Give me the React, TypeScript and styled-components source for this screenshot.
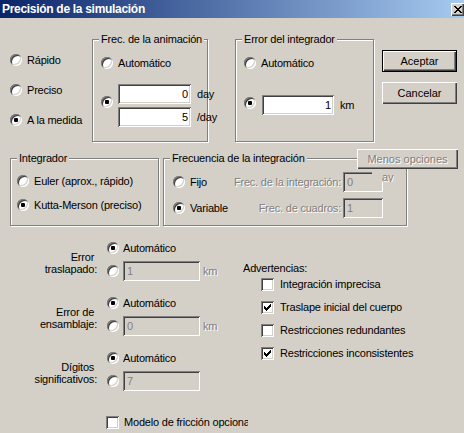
import styled, { createGlobalStyle, css } from "styled-components";

const GlobalStyle = createGlobalStyle`
  * { box-sizing: border-box; }
  html, body { margin: 0; padding: 0; background: #d4d0c8; }
  body {
    font-family: "Liberation Sans", Arial, sans-serif;
    font-size: 11px;
    letter-spacing: -0.2px;
    color: #000;
  }
`;

const sunken = css`
  box-shadow: inset 1px 1px 0 #808080, inset -1px -1px 0 #fff,
    inset 2px 2px 0 #404040, inset -2px -2px 0 #d4d0c8;
`;

const raised = css`
  box-shadow: inset 1px 1px 0 #fff, inset -1px -1px 0 #404040,
    inset -2px -2px 0 #808080;
`;

const Window = styled.div`
  width: 464px;
  height: 433px;
  overflow: hidden;
  background: #d4d0c8;
  display: flex;
  flex-direction: column;
`;

const TitleBar = styled.div`
  flex: none;
  height: 18px;
  display: flex;
  align-items: center;
  justify-content: space-between;
  padding-left: 2px;
  background: linear-gradient(to right, #0a246a, #a6caf0);
`;

const Title = styled.span`
  color: #fff;
  font-weight: bold;
  font-size: 12px;
  letter-spacing: -0.3px;
  line-height: 18px;
`;

const CloseButton = styled.button`
  width: 13px;
  height: 13px;
  padding: 0;
  border: 0;
  background: #d4d0c8;
  display: flex;
  align-items: center;
  justify-content: center;
  ${raised};
`;

const Body = styled.div`
  position: relative;
  display: flex;
  flex-direction: column;
  padding-left: 10px;
`;

const TopRow = styled.div`
  display: flex;
  align-items: flex-start;
  margin-top: 15px;
`;

const ModeList = styled.div`
  flex: none;
  width: 82px;
  padding-top: 21px;
  display: flex;
  flex-direction: column;
  gap: 18px;
`;

const Option = styled.label<{ $gap?: number }>`
  display: flex;
  align-items: center;
  gap: ${(p) => p.$gap ?? 5}px;
  height: 12px;
  line-height: 12px;
  white-space: nowrap;
`;

const Radio = styled.span<{ $on?: boolean; $mt?: number }>`
  flex: none;
  position: relative;
  width: 12px;
  height: 12px;
  margin-top: ${(p) => p.$mt ?? 0}px;
  border-radius: 50%;
  background: #fff;
  ${sunken};
  &::after {
    content: "";
    display: ${(p) => (p.$on ? "block" : "none")};
    position: absolute;
    left: 4px;
    top: 4px;
    width: 4px;
    height: 4px;
    border-radius: 1px;
    background: #000;
  }
`;

const Group = styled.fieldset<{ $w: number; $h: number }>`
  flex: none;
  margin: 0;
  padding: 0;
  min-width: 0;
  width: ${(p) => p.$w}px;
  height: ${(p) => p.$h}px;
  border: 1px solid #808080;
  box-shadow: inset 1px 1px 0 #fff, 1px 1px 0 #fff;
`;

const Legend = styled.legend`
  margin-left: 6px;
  padding: 0 2px;
  line-height: 13px;
  background: #d4d0c8;
`;

const GroupBody = styled.div<{ $pl: number; $pt: number; $gap?: number }>`
  position: relative;
  display: flex;
  flex-direction: column;
  gap: ${(p) => p.$gap ?? 0}px;
  padding-left: ${(p) => p.$pl}px;
  padding-top: ${(p) => p.$pt}px;
`;

const ChoiceRow = styled.div<{ $mt: number; $gap: number }>`
  display: flex;
  align-items: flex-start;
  margin-top: ${(p) => p.$mt}px;
  gap: ${(p) => p.$gap}px;
`;

const FieldStack = styled.div`
  display: flex;
  flex-direction: column;
  gap: 3px;
`;

const FieldLine = styled.div<{ $gap?: number }>`
  display: flex;
  align-items: center;
  gap: ${(p) => p.$gap ?? 6}px;
  white-space: nowrap;
`;

const Field = styled.div<{ $w: number; $off?: boolean; $right?: boolean }>`
  flex: none;
  position: relative;
  width: ${(p) => p.$w}px;
  height: 20px;
  line-height: 20px;
  padding: 0 3px 0 4px;
  text-align: ${(p) => (p.$right ? "right" : "left")};
  background: ${(p) => (p.$off ? "#d4d0c8" : "#fff")};
  color: ${(p) => (p.$off ? "#808080" : "#000")};
  ${sunken};
`;

const Dim = styled.span`
  color: #808080;
  text-shadow: 1px 1px 0 #fff;
  white-space: nowrap;
`;

const ButtonColumn = styled.div`
  flex: none;
  display: flex;
  flex-direction: column;
  gap: 10px;
  margin-left: 8px;
  padding-top: 17px;
`;

const Button = styled.button<{ $default?: boolean }>`
  width: 75px;
  height: 22px;
  padding: 0;
  font: inherit;
  color: #000;
  background: #d4d0c8;
  border: ${(p) => (p.$default ? "1px solid #000" : "0")};
  ${raised};
`;

const MiddleRow = styled.div`
  position: relative;
  display: flex;
  gap: 4px;
  margin-top: 10px;
`;

const RateGrid = styled.div`
  position: relative;
  width: 210px;
  display: grid;
  grid-template-columns: auto 1fr 40px;
  grid-template-rows: 20px 20px;
  row-gap: 6px;
  align-items: center;
`;

const RateLabel = styled(Dim)`
  justify-self: end;
  padding-right: 2px;
`;

const HiddenUnit = styled(Dim)`
  position: absolute;
  z-index: 1;
  left: 199px;
  top: 0;
  width: 22px;
  height: 10px;
  line-height: 11px;
  padding-left: 10px;
  overflow: hidden;
  background: #d4d0c8;
`;

const LessButton = styled(Button)`
  position: absolute;
  left: 347px;
  top: -3px;
  width: 101px;
  height: 20px;
  color: #808080;
  text-shadow: 1px 1px 0 #fff;
`;

const LowerRow = styled.div`
  display: flex;
  margin-top: 16px;
`;

const OverrideColumn = styled.div`
  flex: none;
  width: 233px;
  display: flex;
  flex-direction: column;
  gap: 16px;
`;

const OverrideBlock = styled.div`
  display: grid;
  grid-template-columns: 97px 16px 1fr;
  grid-template-rows: 12px 20px;
  row-gap: 7px;
  align-items: center;
`;

const BlockLabel = styled.div`
  grid-column: 1;
  grid-row: 1 / 3;
  align-self: end;
  padding: 0 10px 6px 0;
  text-align: right;
  line-height: 12px;
  white-space: pre;
`;

const Cell = styled.div<{ $col: number; $row: number }>`
  grid-column: ${(p) => p.$col};
  grid-row: ${(p) => p.$row};
  display: flex;
  align-items: center;
  gap: 3px;
  line-height: 12px;
  white-space: nowrap;
`;

const FrictionRow = styled.label`
  display: flex;
  align-items: center;
  gap: 5px;
  width: 142px;
  height: 13px;
  margin: 9px 0 0 96px;
  overflow: hidden;
  white-space: nowrap;
  line-height: 13px;
`;

const WarningColumn = styled.div`
  padding-top: 20px;
`;

const WarningTitle = styled.div`
  line-height: 12px;
`;

const WarningList = styled.div`
  display: flex;
  flex-direction: column;
  gap: 10px;
  margin: 4px 0 0 18px;
`;

const CheckRow = styled.label`
  display: flex;
  align-items: center;
  gap: 6px;
  height: 13px;
  line-height: 13px;
  white-space: nowrap;
`;

const Box = styled.span`
  flex: none;
  width: 13px;
  height: 13px;
  padding: 3px;
  display: flex;
  background: #fff;
  ${sunken};
`;

const CHECK =
  "M6 0h1v1h-1z M5 1h2v1h-2z M0 2h1v1h-1z M4 2h3v1h-3z M0 3h2v1h-2z M3 3h3v1h-3z M0 4h5v1h-5z M1 5h3v1h-3z M2 6h1v1h-1z";

const CLOSE =
  "M0 0h2v1h-2z M6 0h2v1h-2z M1 1h2v1h-2z M5 1h2v1h-2z M2 2h4v1h-4z M3 3h2v1h-2z M2 4h4v1h-4z M1 5h2v1h-2z M5 5h2v1h-2z M0 6h2v1h-2z M6 6h2v1h-2z";

const Check = ({ on }: { on?: boolean }) => (
  <Box>
    {on && (
      <svg width="7" height="7" viewBox="0 0 7 7" shapeRendering="crispEdges">
        <path d={CHECK} fill="#000" />
      </svg>
    )}
  </Box>
);

const overrides = [
  { lines: "Error \ntraslapado:", value: "1", unit: "km" },
  { lines: "Error de \nensamblaje:", value: "0", unit: "km" },
  { lines: "Dígitos \nsignificativos:", value: "7", unit: "" },
];

const warnings = [
  { text: "Integración imprecisa", on: false },
  { text: "Traslape inicial del cuerpo", on: true },
  { text: "Restricciones redundantes", on: false },
  { text: "Restricciones inconsistentes", on: true },
];

const App = () => (
  <>
    <GlobalStyle />
    <Window>
      <TitleBar>
        <Title>Precisión de la simulación</Title>
        <CloseButton aria-label="Cerrar">
          <svg width="8" height="7" viewBox="0 0 8 7" shapeRendering="crispEdges">
            <path d={CLOSE} fill="#000" />
          </svg>
        </CloseButton>
      </TitleBar>

      <Body>
        <TopRow>
          <ModeList>
            <Option><Radio />Rápido</Option>
            <Option><Radio />Preciso</Option>
            <Option><Radio $on />A la medida</Option>
          </ModeList>

          <Group $w={116} $h={109}>
            <Legend>Frec. de la animación</Legend>
            <GroupBody $pl={8} $pt={11}>
              <Option><Radio />Automático</Option>
              <ChoiceRow $mt={15} $gap={5}>
                <Radio $on $mt={12} />
                <FieldStack>
                  <FieldLine><Field $w={73} $right>0</Field>day</FieldLine>
                  <FieldLine><Field $w={73} $right>5</Field>/day</FieldLine>
                </FieldStack>
              </ChoiceRow>
            </GroupBody>
          </Group>

          <Group $w={139} $h={109} style={{ marginLeft: 27 }}>
            <Legend>Error del integrador</Legend>
            <GroupBody $pl={8} $pt={11}>
              <Option><Radio />Automático</Option>
              <ChoiceRow $mt={26} $gap={6}>
                <Radio $on $mt={2} />
                <FieldLine><Field $w={72} $right>1</Field>km</FieldLine>
              </ChoiceRow>
            </GroupBody>
          </Group>

          <ButtonColumn>
            <Button $default>Aceptar</Button>
            <Button>Cancelar</Button>
          </ButtonColumn>
        </TopRow>

        <MiddleRow>
          <Group $w={149} $h={74}>
            <Legend>Integrador</Legend>
            <GroupBody $pl={6} $pt={10} $gap={12}>
              <Option><Radio />Euler (aprox., rápido)</Option>
              <Option><Radio $on />Kutta-Merson (preciso)</Option>
            </GroupBody>
          </Group>

          <Group $w={244} $h={74}>
            <Legend>Frecuencia de la integración</Legend>
            <GroupBody $pl={9} $pt={7}>
              <RateGrid>
                <Option><Radio />Fijo</Option>
                <RateLabel>Frec. de la integración:</RateLabel>
                <Field $w={40} $off>0</Field>
                <Option><Radio $on />Variable</Option>
                <RateLabel>Frec. de cuadros:</RateLabel>
                <Field $w={40} $off>1</Field>
                <HiddenUnit>ay</HiddenUnit>
              </RateGrid>
            </GroupBody>
          </Group>

          <LessButton disabled>Menos opciones</LessButton>
        </MiddleRow>

        <LowerRow>
          <OverrideColumn>
            {overrides.map((o) => (
              <OverrideBlock key={o.lines}>
                <BlockLabel>{o.lines}</BlockLabel>
                <Cell $col={2} $row={1}><Radio $on /></Cell>
                <Cell $col={3} $row={1}>Automático</Cell>
                <Cell $col={2} $row={2}><Radio /></Cell>
                <Cell $col={3} $row={2}>
                  <Field $w={77} $off>{o.value}</Field>
                  {o.unit && <Dim>{o.unit}</Dim>}
                </Cell>
              </OverrideBlock>
            ))}
            <FrictionRow>
              <Check />
              Modelo de fricción opcional
            </FrictionRow>
          </OverrideColumn>

          <WarningColumn>
            <WarningTitle>Advertencias:</WarningTitle>
            <WarningList>
              {warnings.map((w) => (
                <CheckRow key={w.text}>
                  <Check on={w.on} />
                  {w.text}
                </CheckRow>
              ))}
            </WarningList>
          </WarningColumn>
        </LowerRow>
      </Body>
    </Window>
  </>
);

export default App;
